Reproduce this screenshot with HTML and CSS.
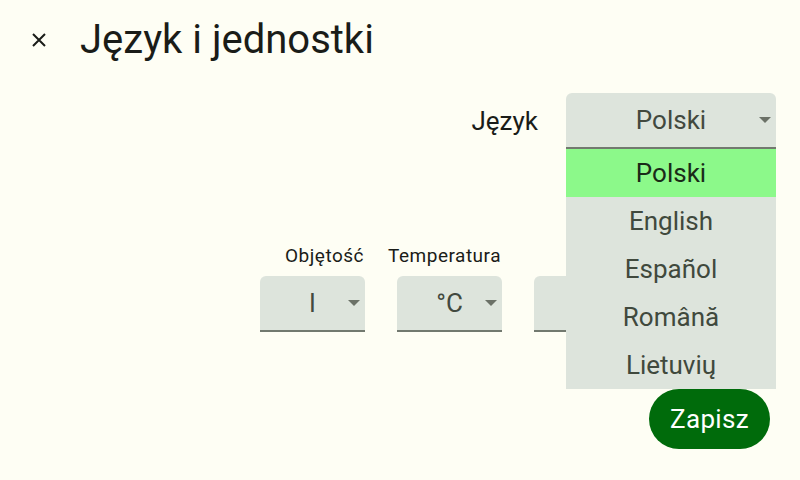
FILE: index.html
```html
<!DOCTYPE html>
<html lang="pl">
<head>
<meta charset="utf-8">
<title>Język i jednostki</title>
<link rel="stylesheet" href="styles.css">
</head>
<body>
<div class="screen">
  <header class="topbar">
    <button class="close-btn" aria-label="Zamknij">
      <svg width="14" height="14" viewBox="0 0 14 14"><path d="M1 1 L13 13 M13 1 L1 13" stroke="#1a1c18" stroke-width="2" fill="none"/></svg>
    </button>
    <h1 class="title">Język i jednostki</h1>
  </header>

  <section class="lang-row">
    <span class="lang-label">Język</span>
    <div class="select-wrap">
      <div class="select select-lang">
        <span class="select-value">Polski</span>
        <svg class="caret" width="12" height="6" viewBox="0 0 12 6"><path d="M0 0 H12 L6 6 Z" fill="#6b7167"/></svg>
      </div>
      <ul class="menu">
        <li class="menu-item selected">Polski</li>
        <li class="menu-item">English</li>
        <li class="menu-item">Español</li>
        <li class="menu-item">Română</li>
        <li class="menu-item">Lietuvių</li>
      </ul>
    </div>
  </section>

  <section class="units-row">
    <div class="unit">
      <span class="unit-label">Objętość</span>
      <div class="select select-unit">
        <span class="select-value">l</span>
        <svg class="caret" width="12" height="6" viewBox="0 0 12 6"><path d="M0 0 H12 L6 6 Z" fill="#6b7167"/></svg>
      </div>
    </div>
    <div class="unit">
      <span class="unit-label">Temperatura</span>
      <div class="select select-unit">
        <span class="select-value">°C</span>
        <svg class="caret" width="12" height="6" viewBox="0 0 12 6"><path d="M0 0 H12 L6 6 Z" fill="#6b7167"/></svg>
      </div>
    </div>
    <div class="unit">
      <span class="unit-label">Masa</span>
      <div class="select select-unit">
        <span class="select-value">kg</span>
        <svg class="caret" width="12" height="6" viewBox="0 0 12 6"><path d="M0 0 H12 L6 6 Z" fill="#6b7167"/></svg>
      </div>
    </div>
    <div class="unit">
      <span class="unit-label">Ciśnienie</span>
      <div class="select select-unit">
        <span class="select-value">bar</span>
        <svg class="caret" width="12" height="6" viewBox="0 0 12 6"><path d="M0 0 H12 L6 6 Z" fill="#6b7167"/></svg>
      </div>
    </div>
  </section>

  <footer class="actions">
    <button class="save-btn">Zapisz</button>
  </footer>
</div>
</body>
</html>
```

FILE: styles.css
```css
* {
  box-sizing: border-box;
}

html, body {
  margin: 0;
  padding: 0;
}

body {
  background: #fefef4;
  font-family: Roboto, "Noto Sans", sans-serif;
  color: #1a1c18;
}

.screen {
  width: 800px;
  height: 480px;
  display: flex;
  flex-direction: column;
}

/* header with close button and title */
.topbar {
  height: 80px;
  display: flex;
  align-items: center;
  padding-left: 32px;
}

.close-btn {
  border: 0;
  background: none;
  padding: 0;
  width: 14px;
  height: 14px;
  display: flex;
}

.title {
  margin: 0 0 0 34px;
  font-size: 40px;
  font-weight: 400;
  line-height: 48px;
}

/* language picker */
.lang-row {
  margin-top: 13px;
  display: flex;
  justify-content: flex-end;
  align-items: center;
  gap: 28px;
  padding-right: 24px;
}

.lang-label {
  font-size: 26px;
}

.select-wrap {
  position: relative;
}

.select {
  background: #dde4dc;
  border-radius: 6px 6px 0 0;
  border-bottom: 2px solid #72796f;
  display: grid;
  grid-template-columns: 1fr auto 1fr;
  align-items: center;
  height: 56px;
  color: #42493f;
}

.select-value {
  grid-column: 2;
}

.caret {
  grid-column: 3;
  justify-self: end;
  margin-right: 5px;
}

.select-lang {
  width: 210px;
  font-size: 26px;
}

/* open language list, drawn over the unit pickers */
.menu {
  position: absolute;
  top: 100%;
  left: 0;
  width: 210px;
  margin: 0;
  padding: 0;
  list-style: none;
  background: #dde4dc;
  z-index: 5;
}

.menu-item {
  height: 48px;
  display: flex;
  align-items: center;
  justify-content: center;
  font-size: 26px;
  color: #40493d;
}

.menu-item.selected {
  background: #8cf98a;
  color: #1a2a18;
}

/* unit pickers: fixed-width columns, labels may run past the left edge */
.units-row {
  margin-top: 96px;
  display: flex;
  justify-content: flex-end;
  gap: 32px;
  padding-right: 24px;
}

.unit {
  flex: none;
  width: 105px;
  display: flex;
  flex-direction: column;
  align-items: flex-end;
  gap: 9px;
}

.unit-label {
  font-size: 19px;
  line-height: 22px;
  letter-spacing: 0.5px;
  white-space: nowrap;
  color: #1a1c18;
  margin-right: 1px;
}

.select-unit {
  width: 105px;
  font-size: 26px;
}

/* save */
.actions {
  margin-top: 57px;
  display: flex;
  justify-content: flex-end;
  padding-right: 30px;
}

.save-btn {
  border: 0;
  background: #006b0b;
  color: #ffffff;
  font-family: Roboto, "Noto Sans", sans-serif;
  font-size: 26px;
  letter-spacing: 0.3px;
  height: 60px;
  width: 121px;
  border-radius: 30px;
  padding: 0;
}
```
